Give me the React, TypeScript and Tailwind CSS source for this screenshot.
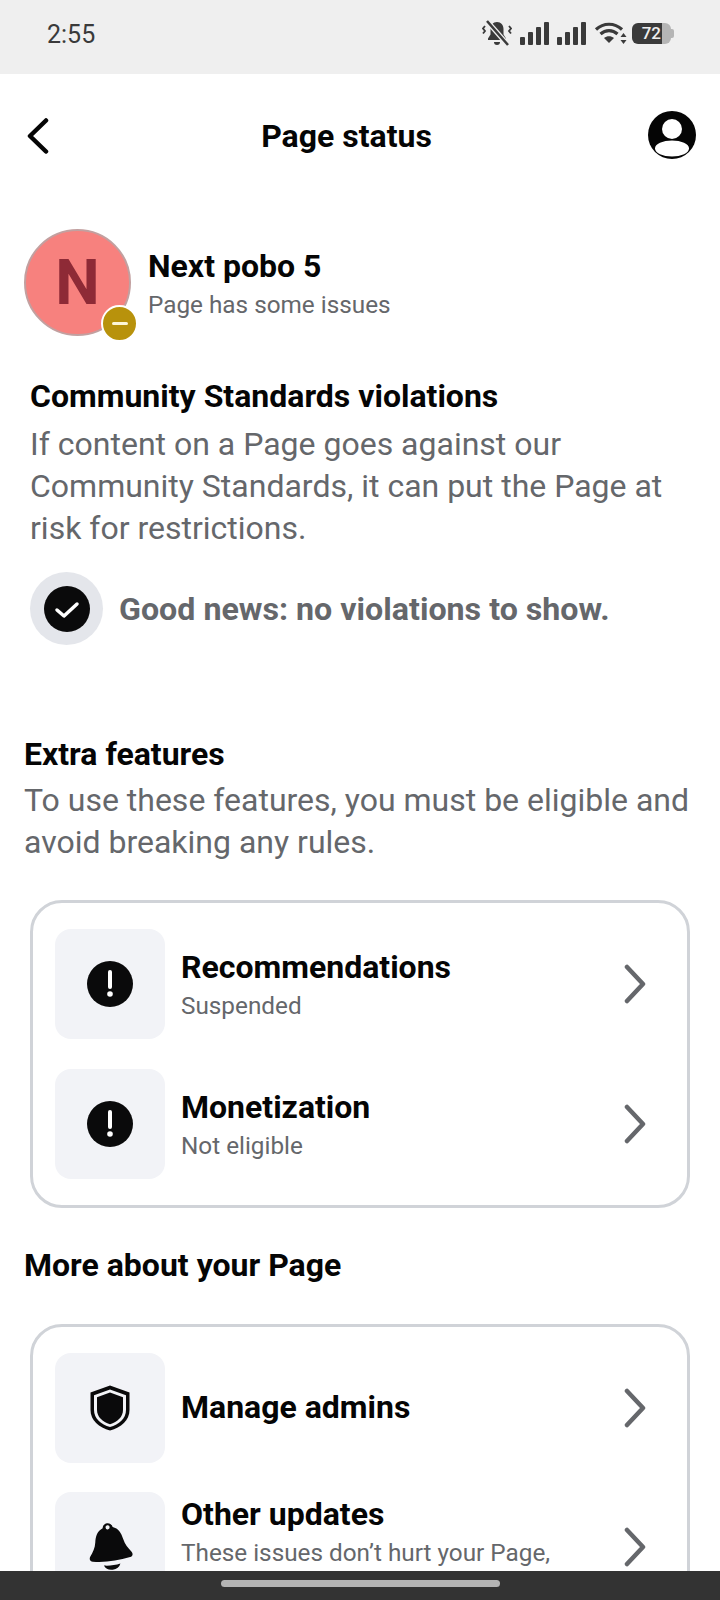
import { ReactNode } from 'react'

function Signal() {
  return (
    <svg width="29" height="23" viewBox="0 0 29 23" fill="#3a3a3a">
      <rect x="0" y="15" width="5" height="8" rx="1" />
      <rect x="8" y="10" width="5" height="13" rx="1" />
      <rect x="16" y="5" width="5" height="18" rx="1" />
      <rect x="24" y="0" width="5" height="23" rx="1" />
    </svg>
  )
}

function MutedBell() {
  return (
    <svg width="30" height="27" viewBox="0 0 30 27" fill="none">
      <path d="M15 2c-4 0-6.500 3-6.500 7v5.500L6 18.500V20h18v-1.500l-2.500-4V9c0-4-2.500-7-6.500-7z" fill="#3a3a3a" />
      <path d="M12 22h6a3 3 0 0 1-6 0z" fill="#3a3a3a" />
      <path d="M5 1l21 24" stroke="#efefef" strokeWidth="5" />
      <path d="M5 1l21 24" stroke="#3a3a3a" strokeWidth="2.500" />
      <path d="M3 6l-2 2.500 2 2.500-2 2.500M27 6l2 2.500-2 2.500 2 2.500" stroke="#3a3a3a" strokeWidth="1.800" />
    </svg>
  )
}

function Wifi() {
  return (
    <svg width="33" height="24" viewBox="0 0 33 24" fill="none">
      <path d="M2 8.500c7.500-7 18.500-7 26 0M6.500 13c5-4.500 12-4.500 17 0" stroke="#3a3a3a" strokeWidth="3.200" />
      <path d="M15 22l-5-5c3-2.300 7-2.300 10 0z" fill="#3a3a3a" />
      <path d="M29.500 12l3 4h-6zM29.500 23l-3-4h6z" fill="#3a3a3a" />
    </svg>
  )
}

function Battery() {
  return (
    <div className="relative flex h-[21px] w-[42px] items-center">
      <div className="flex h-full w-[30px] items-center justify-end rounded-l-[6px] bg-[#3a3a3a] pr-[1px] text-[17px] leading-none font-medium text-[#efefef]">
        72
      </div>
      <div className="h-full w-[9px] rounded-r-[6px] bg-[#b5b5b5]" />
      <div className="h-[9px] w-[3px] rounded-r-[2px] bg-[#b5b5b5]" />
    </div>
  )
}

function Chevron() {
  return (
    <svg width="24" height="40" viewBox="0 0 24 40" fill="none" className="shrink-0">
      <path d="M4 3l16 17L4 37" stroke="#65676b" strokeWidth="4.500" strokeLinecap="round" strokeLinejoin="round" />
    </svg>
  )
}

function AlertIcon() {
  return (
    <svg width="46" height="46" viewBox="0 0 46 46">
      <circle cx="23" cy="23" r="23" fill="#0a0a0b" />
      <path d="M23 11v15" stroke="#fff" strokeWidth="4" strokeLinecap="round" />
      <circle cx="23" cy="33" r="2.800" fill="#fff" />
    </svg>
  )
}

function ShieldIcon() {
  return (
    <svg width="42" height="46" viewBox="0 0 42 46" fill="none">
      <path d="M21 .5 40.500 7.500v17.500c0 10.500-8.500 17.500-19.500 20.500C10 42.500 1.500 35.500 1.500 25V7.500z" fill="#0a0a0b" />
      <path d="M21 4.500 37 10.200V25c0 8.500-7 14.500-16 17C12 39.500 5 33.500 5 25V10.200z" fill="#f2f3f7" />
      <path d="M21 7.500 34 12.200V25c0 6.800-5.500 12-13 14.300C13.500 37 8 31.800 8 25V12.200z" fill="#0a0a0b" />
    </svg>
  )
}

function BellIcon() {
  return (
    <svg width="46" height="50" viewBox="0 0 44 48" fill="none">
      <g transform="rotate(-7 22 24)">
        <path d="M22 1c-2.500 0-4.500 1.800-4.800 4.200C11.800 7.200 9.500 12 8.500 18c-.9 5.500-3.500 9-6.500 13-1.500 2.200-.5 4.500 2 5 12 2.200 24 2.200 36 0 2.500-.5 3.500-2.800 2-5-3-4-5.500-7.500-6.500-13-1-6-3.300-10.800-8.700-12.800C26.500 2.800 24.500 1 22 1z" fill="#0a0a0b" />
        <circle cx="22" cy="5" r="2" fill="#f2f3f7" />
        <path d="M14 41c5 1 11 1 16 0-1.500 3.500-4 5-8 5s-6.500-1.500-8-5z" fill="#0a0a0b" />
      </g>
    </svg>
  )
}

function Row({ icon, title, sub }: { icon: ReactNode; title: string; sub?: string }) {
  return (
    <div className="flex items-center">
      <div className="flex h-[110px] w-[110px] shrink-0 items-center justify-center rounded-[16px] bg-[#f2f3f7]">
        {icon}
      </div>
      <div className="ml-[16px] flex-1 pr-[36px]">
        <p className={sub ? 'pt-[2px] text-[32px] leading-[38px] font-bold text-[#050505]' : 'pb-[3px] text-[32px] leading-[38px] font-bold text-[#050505]'}>
          {title}
        </p>
        {sub && <p className="mt-[4px] text-[24.3px] leading-[32px] text-[#65676b]">{sub}</p>}
      </div>
      <div className="mr-[40px]">
        <Chevron />
      </div>
    </div>
  )
}

export default function App() {
  return (
    <div className="flex h-[1600px] w-[720px] flex-col overflow-hidden bg-white font-['Roboto',sans-serif]">
      <div className="flex h-[74px] shrink-0 items-center justify-between bg-[#efefef] pr-[46px] pb-[4px] pl-[47px]">
        <span className="text-[25px] text-[#3a3a3a]">2:55</span>
        <div className="flex items-center gap-[8px] pb-[4px]">
          <MutedBell />
          <Signal />
          <Signal />
          <Wifi />
          <div className="ml-[-3px]">
            <Battery />
          </div>
        </div>
      </div>

      <main className="min-h-0 flex-1 overflow-hidden">
        <header className="flex h-[122px] items-center justify-between pr-[24px] pl-[27px]">
          <svg width="22" height="36" viewBox="0 0 22 36" fill="none" className="mt-[1px]">
            <path d="M19 2.500 3 18l16 15.500" stroke="#050505" strokeWidth="4.500" strokeLinecap="round" strokeLinejoin="round" />
          </svg>
          <h1 className="mt-[2px] mr-[4px] text-[32px] font-bold text-[#050505]">Page status</h1>
          <svg width="48" height="48" viewBox="0 0 48 48">
            <circle cx="24" cy="24" r="24" fill="#050505" />
            <circle cx="24" cy="18" r="10" fill="#fff" />
            <ellipse cx="24" cy="37.500" rx="17" ry="8" fill="#fff" />
          </svg>
        </header>

        <section className="mt-[33px] flex items-center pl-[24px]">
          <div className="relative h-[107px] w-[107px] shrink-0">
            <div className="flex h-full w-full items-center justify-center rounded-full border-2 border-[#c2a0a0] bg-[#f7817e] text-[63px] leading-none font-bold text-[#8e2a36]">
              N
            </div>
            <div className="absolute right-[-7px] bottom-[-6px] flex h-[37px] w-[37px] items-center justify-center rounded-full border-2 border-white bg-[#b8920c]">
              <div className="h-[3px] w-[16px] rounded-full bg-[#fdf6d8]" />
            </div>
          </div>
          <div className="ml-[17px] pt-[3px]">
            <p className="text-[32px] leading-[38px] font-bold text-[#050505]">Next pobo 5</p>
            <p className="mt-[4px] text-[24.3px] leading-[32px] text-[#65676b]">Page has some issues</p>
          </div>
        </section>

        <section className="mt-[41px] pr-[30px] pl-[30px]">
          <h2 className="text-[32px] leading-[38px] font-bold text-[#050505]">Community Standards violations</h2>
          <p className="mt-[8px] text-[32px] leading-[42px] text-[#65676b]">
            If content on a Page goes against our Community Standards, it can put the Page at risk for restrictions.
          </p>
          <div className="mt-[23px] flex items-center">
            <div className="flex h-[73px] w-[73px] items-center justify-center rounded-full bg-[#e4e6eb]">
              <svg width="46" height="46" viewBox="0 0 46 46">
                <circle cx="23" cy="23" r="23" fill="#0a0a0b" />
                <path d="M13 24l7 6 13-12" fill="none" stroke="#fff" strokeWidth="3.500" strokeLinecap="round" strokeLinejoin="round" />
              </svg>
            </div>
            <p className="ml-[16px] pt-[2px] text-[32.2px] font-bold text-[#65676b]">Good news: no violations to show.</p>
          </div>
        </section>

        <section className="mt-[90px] pr-[30px] pl-[24px]">
          <h2 className="text-[32px] leading-[38px] font-bold text-[#050505]">Extra features</h2>
          <p className="mt-[6px] text-[32px] leading-[42px] text-[#65676b]">
            To use these features, you must be eligible and avoid breaking any rules.
          </p>
        </section>

        <div className="mx-[30px] mt-[37px] flex flex-col gap-[30px] rounded-[32px] border-[3px] border-[#d0d3d8] py-[26px] pl-[22px]">
          <Row icon={<AlertIcon />} title="Recommendations" sub="Suspended" />
          <Row icon={<AlertIcon />} title="Monetization" sub="Not eligible" />
        </div>

        <h2 className="mt-[38px] pl-[24px] text-[32px] leading-[38px] font-bold text-[#050505]">More about your Page</h2>

        <div className="mx-[30px] mt-[40px] flex flex-col gap-[29px] rounded-[32px] border-[3px] border-[#d0d3d8] py-[26px] pl-[22px]">
          <Row icon={<ShieldIcon />} title="Manage admins" />
          <Row
            icon={<BellIcon />}
            title="Other updates"
            sub="These issues don’t hurt your Page, but you may want to check them."
          />
        </div>
      </main>

      <div className="flex h-[29px] shrink-0 items-center justify-center bg-[#333333] pb-[4px]">
        <div className="h-[7px] w-[279px] rounded-full bg-[#b4b4b4]" />
      </div>
    </div>
  )
}
